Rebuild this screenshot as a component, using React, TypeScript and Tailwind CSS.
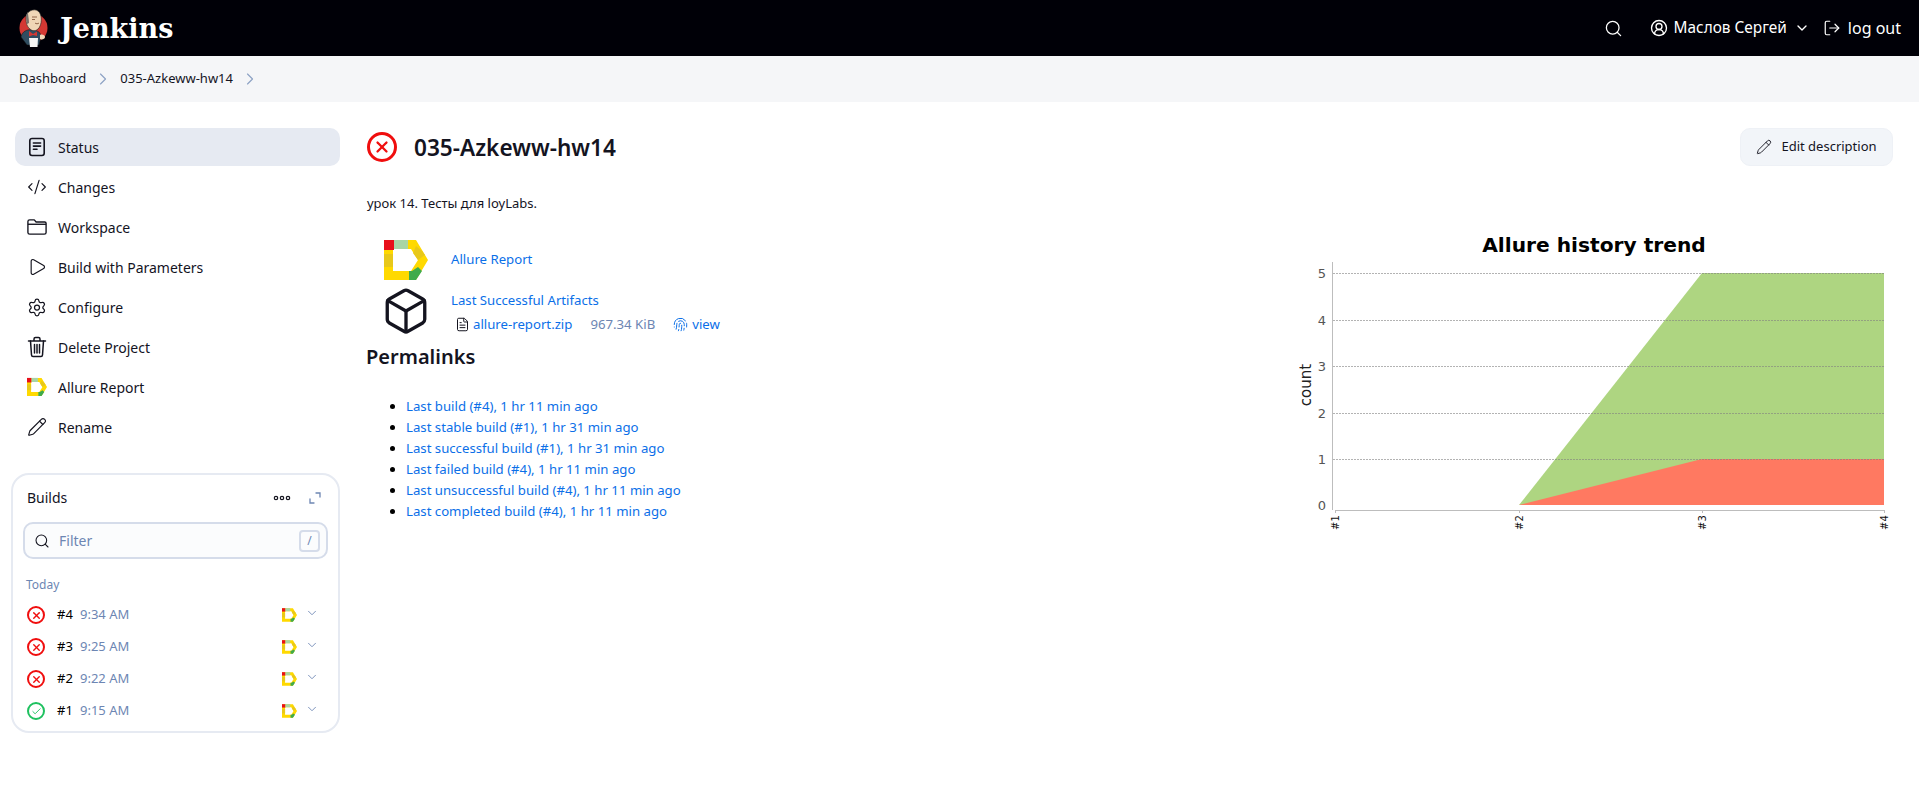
import React from "react";
import { Search, CircleUserRound, ChevronDown, ChevronRight, LogOut, Pencil, CodeXml, Play, Settings, Box, Fingerprint, FileText, X, Check } from "lucide-react";

function AllureIcon({ className }: { className?: string }) {
  return (
    <svg viewBox="0 0 44 40" className={className}>
      <path fillRule="evenodd" d="M0 0H32L44 20L32 40H0ZM9 9V31H27L34 20L27 9Z" fill="#ffd900" />
      <path d="M0 0H10V10H0Z" fill="#e8101a" />
      <path d="M10 0H24V9H10Z" fill="#a8d5a5" />
      <path d="M0 14H9V27H0Z" fill="#e8c81a" />
      <path d="M32 6L38 11L41 15L34 20L29 13Z" fill="#e8c81a" />
      <path d="M34 27L38 31L32 40H25V31H28Z" fill="#3fab4b" />
    </svg>
  );
}

function JenkinsLogo() {
  return (
    <svg viewBox="0 0 30 40" className="h-[40px] w-[30px]">
      <circle cx="14.5" cy="20" r="14" fill="#d33833" />
      <path d="M2 29C3 23 9 21 13 22C18 22 22 24 22 29L20 37H8Z" fill="#2f4d61" stroke="#111" strokeWidth="0.5" />
      <path d="M7 10C7 3 15 0 19 3C23 6 23 14 21 18C19 23 14 24 11 21C8 19 7 15 7 10Z" fill="#f0d6b7" stroke="#222" strokeWidth="0.6" />
      <path d="M7 10C7 7 8 5 9 4C9 8 10 11 10 15L8 16Z" fill="#77716b" />
      <path d="M13 9H18M13 11.5H16M16 15C17 16 19 16 20 15" stroke="#7a4a30" strokeWidth="0.8" fill="none" />
      <path d="M10 23L14 26L18 23.5L18 28L14 27L10 28.5Z" fill="#d33833" />
      <path d="M10 30H19L18.5 39H11Z" fill="#f4f4f4" />
      <path d="M21 27C23 26 26 27 26 29C26 31 23 32 21 31Z" fill="#f0d6b7" />
    </svg>
  );
}

function Status({ ok, size = "s" }: { ok?: boolean; size?: "s" | "l" }) {
  const c = size === "l" ? "h-[30px] w-[30px] border-[3px]" : "h-[18px] w-[18px] border-2";
  const i = size === "l" ? 18 : 11;
  return (
    <span className={`flex shrink-0 items-center justify-center rounded-full ${c} ${ok ? "border-[#1ec15f] text-[#1ec15f]" : "border-[#f00e0e] text-[#f00e0e]"}`}>
      {ok ? <Check size={i} strokeWidth={2} /> : <X size={i} strokeWidth={3} />}
    </span>
  );
}

function DocIcon() {
  return (
    <svg viewBox="0 0 20 22" width="18" height="20" fill="none" stroke="currentColor" strokeWidth="1.8" strokeLinecap="round">
      <rect x="2" y="1.5" width="16" height="19" rx="2.5" />
      <path d="M6 6.5H14M6 10H14M6 13.5H10" />
    </svg>
  );
}
function FolderIcon() {
  return (
    <svg viewBox="0 0 22 18" width="22" height="18" fill="none" stroke="currentColor" strokeWidth="1.5" strokeLinejoin="round">
      <path d="M1 3C1 2 2 1.2 3 1.2H8L10 3.5H19.5C20.3 3.5 21 4.2 21 5V15C21 16 20.2 16.8 19 16.8H3C2 16.8 1 16 1 15Z" />
      <path d="M1 6H21" />
    </svg>
  );
}
function TrashIcon() {
  return (
    <svg viewBox="0 0 20 22" width="20" height="22" fill="none" stroke="currentColor" strokeWidth="1.5" strokeLinecap="round" strokeLinejoin="round">
      <path d="M1.5 5H18.5M7 5V3C7 2 7.8 1.5 8.5 1.5H11.5C12.3 1.5 13 2 13 3V5" />
      <path d="M3.5 5L4.5 19C4.6 20 5.3 20.5 6 20.5H14C14.8 20.5 15.4 20 15.5 19L16.5 5" />
      <path d="M7.5 8.5V17M10 8.5V17M12.5 8.5V17" />
    </svg>
  );
}
function DotsIcon() {
  return (
    <svg viewBox="0 0 18 6" width="18" height="6" fill="none" stroke="currentColor" strokeWidth="1.2">
      <circle cx="3" cy="3" r="1.7" />
      <circle cx="9" cy="3" r="1.7" />
      <circle cx="15" cy="3" r="1.7" />
    </svg>
  );
}
function ExpandIcon() {
  return (
    <svg viewBox="0 0 12 12" width="12" height="12" fill="none" stroke="currentColor" strokeWidth="1.3" strokeLinecap="round">
      <path d="M7 1H11V5M1 7V11H5" />
    </svg>
  );
}

const nav: [React.ReactNode, string][] = [
  [<DocIcon />, "Status"],
  [<CodeXml size={24} strokeWidth={1.4} />, "Changes"],
  [<FolderIcon />, "Workspace"],
  [<Play size={22} strokeWidth={1.4} />, "Build with Parameters"],
  [<Settings size={23} strokeWidth={1.5} />, "Configure"],
  [<TrashIcon />, "Delete Project"],
  [<AllureIcon className="h-[20px] w-[20px]" />, "Allure Report"],
  [<Pencil size={20} strokeWidth={1.4} />, "Rename"],
];

const builds = [
  ["#4", "9:34 AM", false],
  ["#3", "9:25 AM", false],
  ["#2", "9:22 AM", false],
  ["#1", "9:15 AM", true],
] as const;

const perma = [
  "Last build (#4), 1 hr 11 min ago",
  "Last stable build (#1), 1 hr 31 min ago",
  "Last successful build (#1), 1 hr 31 min ago",
  "Last failed build (#4), 1 hr 11 min ago",
  "Last unsuccessful build (#4), 1 hr 11 min ago",
  "Last completed build (#4), 1 hr 11 min ago",
];

function Chart() {
  const ys = [505, 459, 413, 366, 320, 273];
  const xs = [1336, 1520, 1703, 1885];
  return (
    <svg width="620" height="340" viewBox="1280 220 620 340" className="shrink-0">
      <text x="1595" y="252" textAnchor="middle" fontFamily="DejaVu Sans" fontWeight="700" fontSize="20.2" fill="#000">Allure history trend</text>
      <path d={`M${xs[1]} 505 L${xs[2]} 273 H${xs[3]} V505 Z`} fill="#aed581" />
      <path d={`M${xs[1]} 505 L${xs[2]} 459 H${xs[3]} V505 Z`} fill="#ff7961" />
      {ys.slice(1).map((y) => (
        <line key={y} x1="1334" x2={xs[3]} y1={y + 0.5} y2={y + 0.5} stroke="#808080" strokeOpacity="0.6" strokeDasharray="2 1" />
      ))}
      <line x1="1333.5" x2="1333.5" y1="262" y2="510" stroke="#bdbdbd" />
      <line x1="1336" x2={xs[3]} y1="510.5" y2="510.5" stroke="#bdbdbd" />
      {ys.map((y, i) => (
        <text key={y} x="1327" y={y + 5} textAnchor="end" fontFamily="DejaVu Sans" fontSize="13" fill="#555">{i}</text>
      ))}
      <text transform="translate(1312 385) rotate(-90)" textAnchor="middle" fontFamily="DejaVu Sans" fontSize="15" fill="#222">count</text>
      {xs.map((x, i) => (
        <g key={x}>
          <line x1={x + 0.5} x2={x + 0.5} y1="510" y2="513" stroke="#bdbdbd" />
          <text transform={`translate(${x + 3.5} 530) rotate(-90)`} fontFamily="DejaVu Sans" fontSize="10" fill="#111">{`#${i + 1}`}</text>
        </g>
      ))}
    </svg>
  );
}

export default function App() {
  return (
    <div className="min-h-[792px] bg-white text-[14px] text-[#14141f] [font-family:'Noto_Sans',sans-serif]">
      <header className="flex h-[56px] items-center justify-between bg-[#000007] pl-[19px] pr-[18px] text-white">
        <div className="flex items-center gap-[11px]">
          <JenkinsLogo />
          <span className="text-[27px] font-bold leading-none [font-family:'DejaVu_Serif',serif]">Jenkins</span>
        </div>
        <div className="flex items-center text-[15.4px]">
          <button className="mr-[18px] flex h-[36px] w-[36px] items-center justify-center"><Search size={19} strokeWidth={1.6} /></button>
          <button className="flex h-[38px] items-center gap-[6px] pr-[13px]">
            <CircleUserRound size={18} strokeWidth={1.8} />
            <span>Маслов Сергей</span>
            <ChevronDown size={16} className="ml-[1px]" />
          </button>
          <button className="flex h-[38px] items-center gap-[7px] text-[16px]">
            <LogOut size={18} strokeWidth={1.6} />
            <span>log out</span>
          </button>
        </div>
      </header>

      <nav className="flex h-[46px] items-center gap-[7px] bg-[#f5f6f8] pl-[19px] text-[13px]">
        <span>Dashboard</span>
        <ChevronRight size={20} strokeWidth={1.4} className="text-[#8da2c4]" />
        <span>035-Azkeww-hw14</span>
        <ChevronRight size={20} strokeWidth={1.4} className="text-[#8da2c4]" />
      </nav>

      <div className="flex pt-[26px]">
        <aside className="ml-[11px] w-[329px] shrink-0">
          <div className="flex flex-col gap-[2px] pl-[4px]">
            {nav.map(([icon, label], i) => (
              <div key={label} className={`flex h-[38px] items-center rounded-[10px] pl-[12px] ${i === 0 ? "bg-[#e6eaf2]" : ""}`}>
                <span className="flex w-[20px] items-center justify-center">{icon}</span>
                <span className="ml-[11px]">{label}</span>
              </div>
            ))}
          </div>
          <div className="mt-[27px] h-[260px] rounded-[18px] border-2 border-[#e6eaf2] px-[10px]">
            <div className="flex h-[45px] items-center pl-[4px] pr-[3px]">
              <span className="flex-1 text-[14px]">Builds</span>
              <span className="mr-[18px]"><DotsIcon /></span>
              <span className="mr-[4px] text-[#6d86b3]"><ExpandIcon /></span>
            </div>
            <div className="mt-[2px] flex h-[37px] items-center rounded-[10px] border-2 border-[#d5dcea] bg-[#fbfcfd] pl-[9px] pr-[6px]">
              <Search size={16} strokeWidth={1.6} />
              <span className="ml-[9px] flex-1 text-[#6d86b3]">Filter</span>
              <span className="flex h-[22px] w-[21px] items-center justify-center rounded-[4px] border-2 border-[#d5dcea] text-[12px] text-[#6d86b3]">/</span>
            </div>
            <div className="mt-[18px] pl-[3px] text-[12px] leading-[16px] text-[#6d86b3]">Today</div>
            <div className="mt-[6px]">
              {builds.map(([n, t, ok]) => (
                <div key={n} className="flex h-[32px] items-center pl-[4px] text-[13px]">
                  <Status ok={ok} />
                  <span className="ml-[12px] w-[23px] text-black">{n}</span>
                  <span className="flex-1 text-[#6d86b3]">{t}</span>
                  <AllureIcon className="h-[14px] w-[15px]" />
                  <ChevronDown size={14} strokeWidth={1.5} className="ml-[8px] mr-[9px] -mt-[4px] text-[#6d86b3]" />
                </div>
              ))}
            </div>
          </div>
        </aside>

        <main className="ml-[27px] min-w-0 flex-1 pr-[26px]">
          <div className="flex h-[38px] items-center">
            <Status size="l" />
            <h1 className="ml-[17px] flex-1 pt-[2px] text-[22.6px] font-semibold leading-none">035-Azkeww-hw14</h1>
            <button className="flex h-[38px] w-[153px] items-center justify-center gap-[9px] rounded-[10px] border border-[#eef1f6] bg-[#f2f5f9] text-[13px]">
              <Pencil size={16} strokeWidth={1.4} />
              Edit description
            </button>
          </div>
          <div className="flex justify-between">
            <div>
              <p className="mt-[27px] text-[13px] leading-[20px]">урок 14. Тесты для loyLabs.</p>
              <div className="mt-[27px] flex items-center pl-[17px]">
                <AllureIcon className="h-[40px] w-[44px]" />
                <a className="ml-[23px] text-[13.2px] text-[#0b6fe8]">Allure Report</a>
              </div>
              <div className="mt-[9px] flex pl-[17px]">
                <span className="flex w-[44px] justify-center"><Box size={50} strokeWidth={1.6} className="-mx-[3px] -mt-[3px] shrink-0" /></span>
                <div className="ml-[23px] text-[13.2px] text-[#0b6fe8]">
                  <a className="block leading-[22px]">Last Successful Artifacts</a>
                  <div className="mt-[2px] flex items-center leading-[22px]">
                    <FileText size={15} strokeWidth={1.6} className="ml-[4px] text-[#14141f]" />
                    <a className="ml-[3px]">allure-report.zip</a>
                    <span className="ml-[18px] text-[#6d86b3]">967.34 KiB</span>
                    <Fingerprint size={15} strokeWidth={1.6} className="ml-[18px]" />
                    <a className="ml-[4px]">view</a>
                  </div>
                </div>
              </div>
              <h2 className="-ml-[1px] mt-[7px] text-[20px] font-semibold leading-[28px]">Permalinks</h2>
              <ul className="mt-[25px] list-disc pl-[39px] text-[13.2px] leading-[21px] text-[#0b6fe8] marker:text-black">
                {perma.map((p) => <li key={p}>{p}</li>)}
              </ul>
            </div>
            <div className="-mr-[6px] mt-[54px]"><Chart /></div>
          </div>
        </main>
      </div>
    </div>
  );
}
